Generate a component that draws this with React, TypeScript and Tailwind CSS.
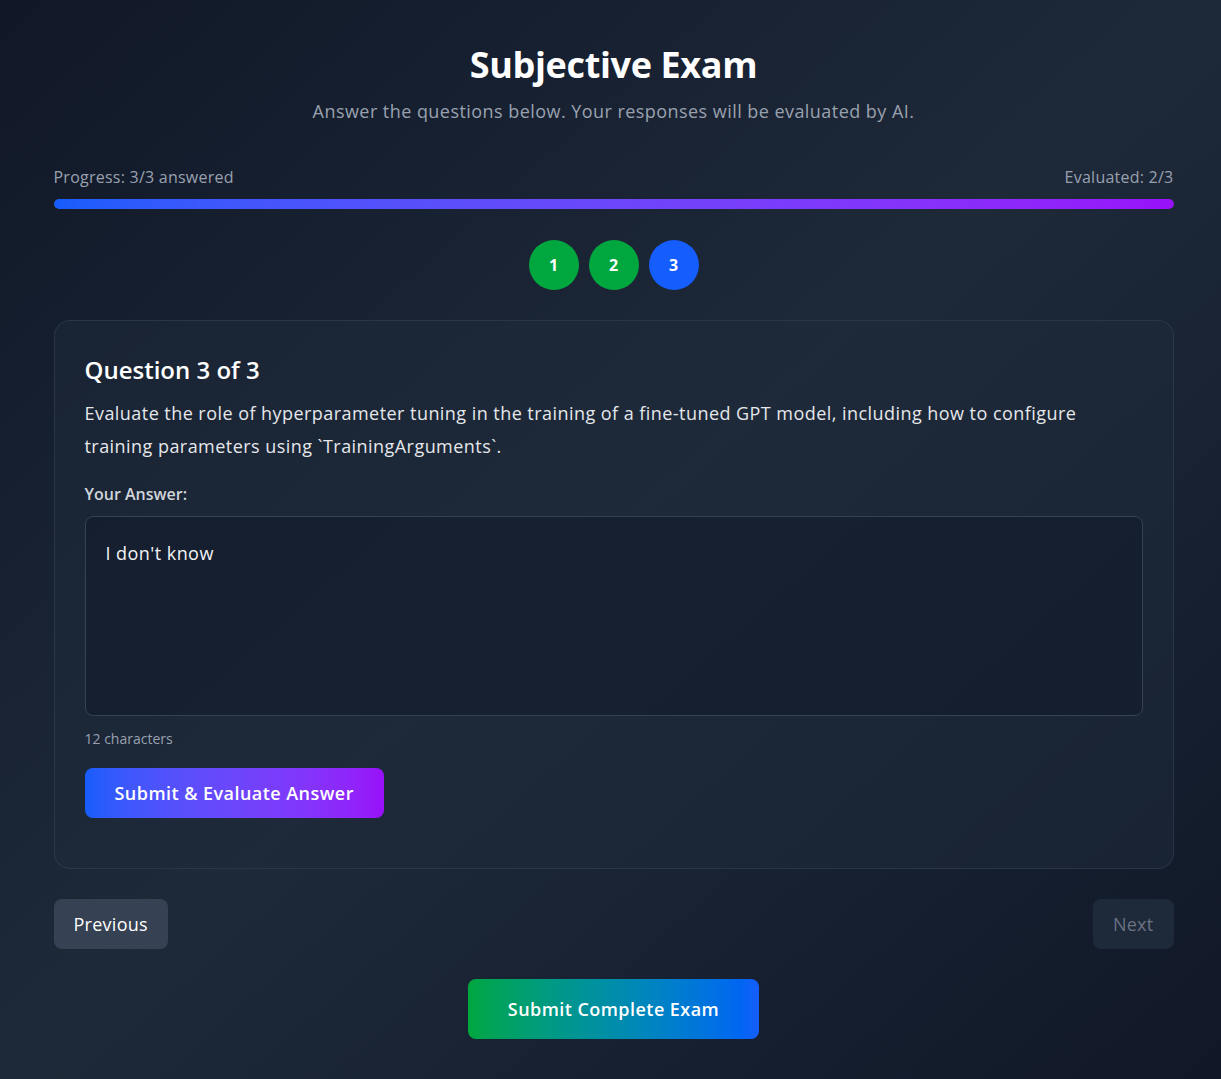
import { useState } from "react";

const SubjectiveExam = () => {
  const [answer, setAnswer] = useState("I don't know");
  const questions = [1, 2, 3];
  const current = 3;

  return (
    <div
      className="min-h-screen bg-gradient-to-br from-gray-900 via-gray-800 to-gray-900 text-white pt-[45px] pb-10"
      style={{ fontFamily: "'Open Sans', 'Noto Sans', sans-serif" }}
    >
      <div className="max-w-[1120px] mx-auto translate-x-[3px]">
        <div className="text-center mb-[40px]">
          <h1 className="text-4xl leading-[40px] font-bold tracking-[-0.01em] mb-3">Subjective Exam</h1>
          <p className="text-lg leading-7 tracking-[0.025em] text-gray-400">
            Answer the questions below. Your responses will be evaluated by AI.
          </p>
        </div>

        <div className="mb-[31px]">
          <div className="flex justify-between text-base leading-6 tracking-[0.015em] text-gray-400 mb-[10px]">
            <span>Progress: 3/3 answered</span>
            <span>Evaluated: 2/3</span>
          </div>
          <div className="h-[10px] w-full rounded-full bg-gray-700 overflow-hidden">
            <div className="h-full w-full rounded-full bg-gradient-to-r from-blue-600 to-purple-600"></div>
          </div>
        </div>

        <div className="flex justify-center gap-[10px] mb-[30px]">
          {questions.map((q) => (
            <button
              key={q}
              className={`w-[50px] h-[50px] rounded-full flex items-center justify-center font-bold text-base ${
                q === current ? "bg-blue-600" : "bg-green-600"
              }`}
            >
              {q}
            </button>
          ))}
        </div>

        <div className="rounded-2xl border border-gray-700/60 bg-gray-800/50 px-[30px] pt-[33px] pb-[50px]">
          <h2 className="text-2xl leading-8 font-semibold mb-[11px]">Question 3 of 3</h2>
          <p className="text-lg leading-[33px] tracking-[0.025em] text-gray-200 mb-[19px]">
            Evaluate the role of hyperparameter tuning in the training of a fine-tuned GPT model, including how to configure training parameters using `TrainingArguments`.
          </p>
          <label className="block text-base leading-6 font-semibold text-gray-300 mb-[10px]">
            Your Answer:
          </label>
          <textarea
            value={answer}
            onChange={(e) => setAnswer(e.target.value)}
            className="block w-full h-[200px] resize-none rounded-lg border border-gray-700 bg-gray-900/50 px-5 py-[22px] text-lg leading-7 tracking-[0.025em] text-gray-100 outline-none"
          />
          <p className="text-sm leading-5 text-gray-400 mt-[13px] mb-[19px]">
            {answer.length} characters
          </p>
          <button className="h-[50px] px-[30px] rounded-lg bg-gradient-to-r from-blue-600 to-purple-600 text-lg font-semibold tracking-[0.025em]">
            Submit &amp; Evaluate Answer
          </button>
        </div>

        <div className="flex justify-between mt-[30px]">
          <button className="h-[50px] px-5 rounded-lg bg-gray-700 text-lg tracking-[0.015em]">Previous</button>
          <button disabled className="h-[50px] px-5 rounded-lg bg-gray-800 text-lg tracking-[0.015em] text-gray-500">
            Next
          </button>
        </div>

        <div className="flex justify-center mt-[30px]">
          <button className="h-[60px] px-10 rounded-lg bg-gradient-to-r from-green-600 to-blue-600 text-lg font-semibold tracking-[0.025em]">
            Submit Complete Exam
          </button>
        </div>
      </div>
    </div>
  );
};

export default function App() {
  return <SubjectiveExam />;
}
